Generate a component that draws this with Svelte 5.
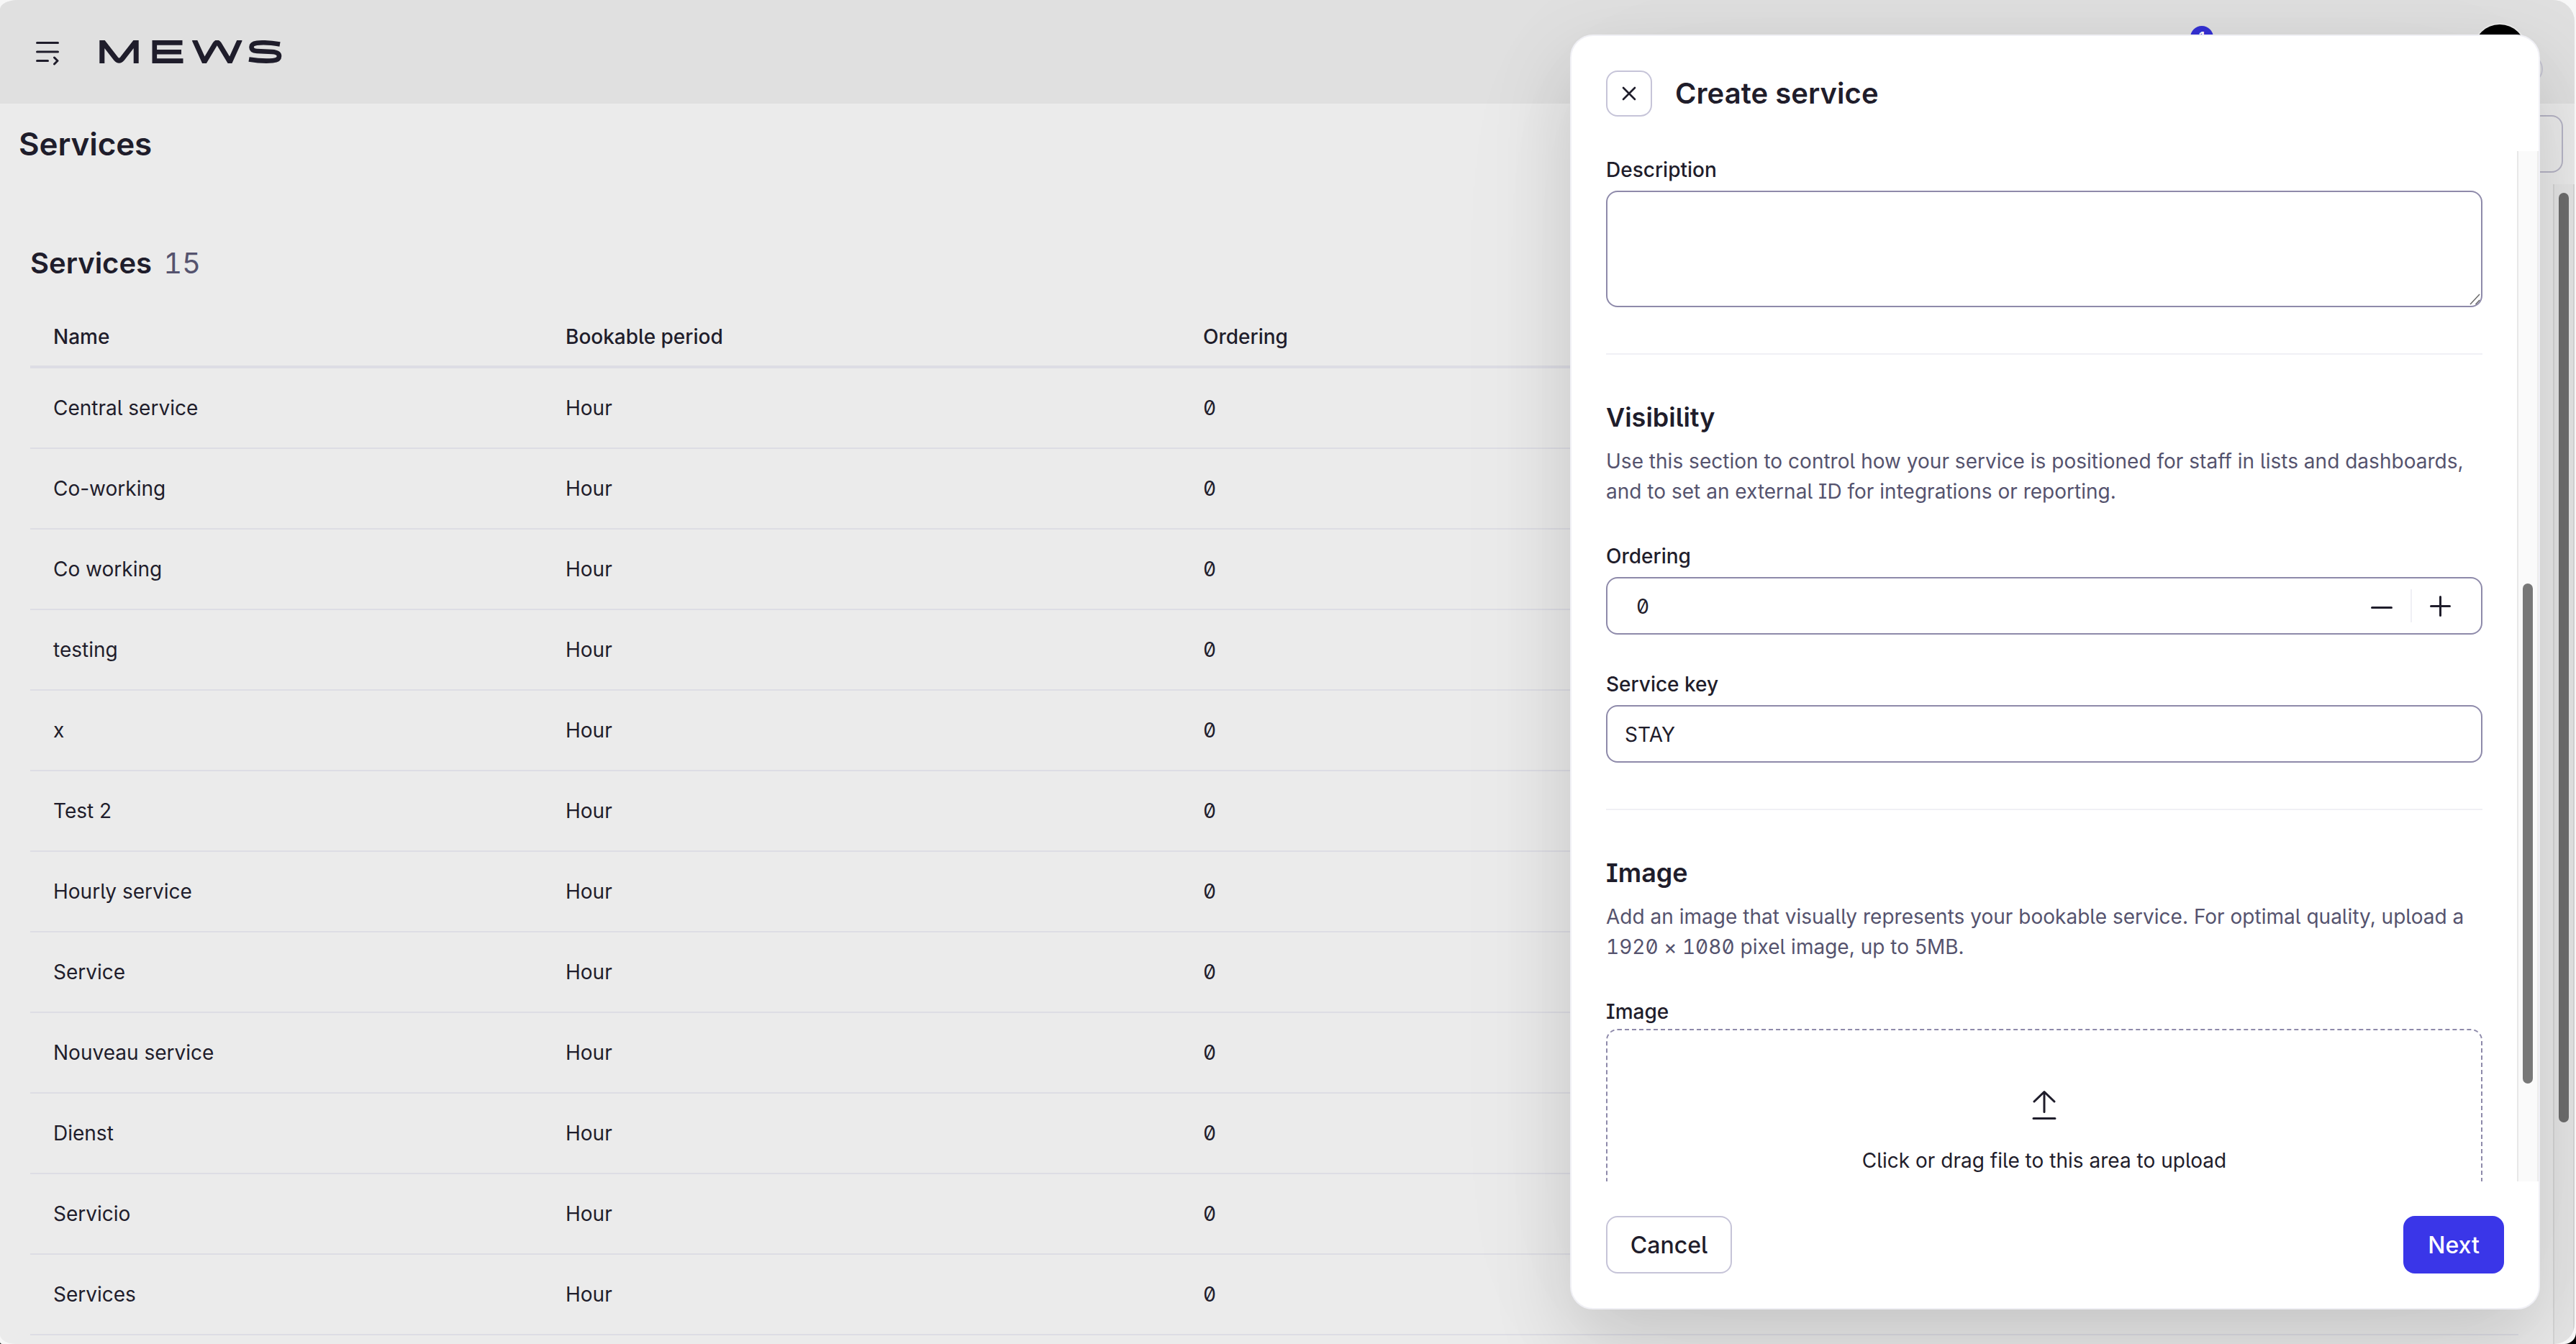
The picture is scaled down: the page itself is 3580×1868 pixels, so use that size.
<script lang="ts">
	const services = [
		'Central service',
		'Co-working',
		'Co working',
		'testing',
		'x',
		'Test 2',
		'Hourly service',
		'Service',
		'Nouveau service',
		'Dienst',
		'Servicio',
		'Services'
	].map((name) => ({ name, period: 'Hour', ordering: 0 }))

	let description = ''
	let ordering = 0
	let serviceKey = 'STAY'
</script>

<div class="shell">
	<div class="window">
		<header class="topbar">
			<svg class="menu" width="32" height="36" viewBox="0 0 32 36" fill="none" stroke-width="3" stroke-linecap="round" stroke-linejoin="round">
				<path d="M1.5 3.5H30.5M1.5 16H30.5M1.5 28.5H16.5M25.5 24L30 28.5L25.5 33" />
			</svg>
			<svg class="logo" width="254" height="32" viewBox="0 0 254 32" role="img" aria-label="Mews">
				<g fill="none" stroke-width="7">
					<path d="M3.8 32V0M51.2 32V0M4 1L23 25.5Q27.5 31 32 25.5L51 1" />
					<path d="M76.8 0V32M76 3.4H115.5M76 16.2H114M76 28.6H116.5" stroke-width="6.6" />
					<path d="M132 -1L146 30L161 5Q163.7 1 166.4 5L181.5 30L195.5 -1" />
					<path d="M251 5.5Q232 2.2 219 3.8Q211.5 4.8 211.5 9.5Q211.5 14.5 219 15L240 16Q250 16.6 250 22Q250 27.5 241 28.3Q226 29.5 208 26.5" stroke-width="6.6" />
				</g>
			</svg>
			<div class="account">
				<span class="badge">1</span>
				<span class="avatar"></span>
				<span class="chip"></span>
			</div>
		</header>

		<div class="titlebar">
			<h1>Services</h1>
			<button class="action" aria-label="Actions"></button>
		</div>

		<div class="content">
			<main>
				<h2>Services <span class="count numeric">15</span></h2>
				<div class="row head">
					<span>Name</span>
					<span>Bookable period</span>
					<span>Ordering</span>
				</div>
				{#each services as service, index (index)}
					<div class="row">
						<span>{service.name}</span>
						<span>{service.period}</span>
						<span class="numeric">{service.ordering}</span>
					</div>
				{/each}
			</main>
			<div class="track page-track"><div class="thumb"></div></div>
		</div>

		<aside class="drawer">
			<div class="drawer-head">
				<button class="close" aria-label="Close">
					<svg width="20" height="20" viewBox="0 0 20 20" fill="none" stroke-width="2.6" stroke-linecap="round">
						<path d="M2 2L18 18M18 2L2 18" />
					</svg>
				</button>
				<h2>Create service</h2>
			</div>

			<div class="drawer-body">
				<form>
					<label for="description">Description</label>
					<div class="area">
						<textarea id="description" bind:value={description}></textarea>
						<svg class="grip" width="16" height="16" viewBox="0 0 16 16" fill="none" stroke-width="1.5">
							<path d="M1 15L14 1M8.5 15L14 9" />
						</svg>
					</div>
					<hr />

					<h3>Visibility</h3>
					<p>Use this section to control how your service is positioned for staff in lists and dashboards, and to set an external ID for integrations or reporting.</p>
					<label for="ordering">Ordering</label>
					<div class="field number">
						<input id="ordering" class="numeric" bind:value={ordering} />
						<svg width="32" height="32" viewBox="0 0 32 32" fill="none" stroke-width="3" stroke-linecap="round">
							<path d="M2.5 18.5H29.5" />
						</svg>
						<span class="split"></span>
						<svg width="32" height="32" viewBox="0 0 32 32" fill="none" stroke-width="3" stroke-linecap="round">
							<path d="M3.5 16.5H29.5M16.5 3.5V29.5" />
						</svg>
					</div>
					<label class="key-label" for="key">Service key</label>
					<div class="field">
						<input id="key" bind:value={serviceKey} />
					</div>
					<hr />

					<h3>Image</h3>
					<p>Add an image that visually represents your bookable service. For optimal quality, upload a <span class="numeric">1920 × 1080</span> pixel image, up to 5MB.</p>
					<span class="label">Image</span>
					<div class="dropzone">
						<svg width="34" height="42" viewBox="0 0 34 42" fill="none" stroke-width="3" stroke-linecap="round" stroke-linejoin="round">
							<path d="M17 30.5V2.5M3 16L17 2.5L31 16M2 39.5H32" />
						</svg>
						<span>Click or drag file to this area to upload</span>
					</div>
				</form>
				<div class="track"><div class="thumb"></div></div>
			</div>

			<div class="drawer-foot">
				<button class="cancel">Cancel</button>
				<button class="next">Next</button>
			</div>
		</aside>
	</div>
</div>

<style>
	:global(body) {
		background: #000;
		overflow: hidden;
	}

	.shell {
		width: 3580px;
		height: 1868px;
		border-radius: 0 0 16px 3px;
		background: #f7f7f7;
		overflow: hidden;
	}

	.window,
	.window * {
		box-sizing: border-box;
	}

	.window {
		position: relative;
		display: flex;
		flex-direction: column;
		width: 3578px;
		height: 1868px;
		overflow: hidden;
		border-radius: 25px 30px 28px 22px / 13px 30px 28px 13px;
		background: #ebebeb;
		color: #1f1d2b;
		font-family: Inter, 'Liberation Sans', sans-serif;
		font-size: 28px;
		font-feature-settings: 'zero', 'ss02';
	}

	h1,
	h2,
	h3,
	p {
		margin: 0;
	}

	button,
	input,
	textarea {
		padding: 0;
		border: none;
		background: none;
		color: inherit;
		font: inherit;
		font-feature-settings: inherit;
		letter-spacing: inherit;
		outline: none;
	}

	.window .numeric {
		font-feature-settings: 'tnum', 'zero', 'ss02';
	}

	svg {
		display: block;
		flex: none;
		stroke: #1f1d2b;
	}

	.topbar {
		display: flex;
		flex: none;
		height: 144px;
		padding: 56px 44px 0 50px;
		background: #e0e0e0;
	}

	.logo {
		margin-left: 56px;
	}

	.account {
		display: flex;
		margin: -24px 0 0 auto;
	}

	.badge {
		width: 32px;
		height: 32px;
		margin-top: 4px;
		border-radius: 50%;
		background: #3531d4;
		color: #fff;
		font-size: 20px;
		font-weight: 600;
		line-height: 32px;
		text-align: center;
	}

	.avatar {
		width: 76px;
		height: 76px;
		margin-left: 360px;
		border: 2px solid #ebebeb;
		border-radius: 50%;
		background: #000;
	}

	.chip {
		width: 40px;
		height: 40px;
		margin: 44px 0 0 -18px;
		border: 2px solid #c6c5d2;
		border-radius: 50%;
	}

	.titlebar {
		display: flex;
		flex: none;
		justify-content: space-between;
		height: 112px;
		padding: 16px 16px 0 26px;
	}

	h1 {
		font-size: 44px;
		font-weight: 600;
		letter-spacing: -0.1px;
		line-height: 80px;
	}

	.action {
		width: 240px;
		height: 80px;
		border: 2px solid #b7b5c6;
		border-radius: 16px;
	}

	.content {
		display: flex;
		flex: 1;
		justify-content: space-between;
	}

	main {
		width: 3458px;
		margin-left: 42px;
		padding-top: 86px;
	}

	main h2 {
		height: 84px;
		font-size: 40px;
		font-weight: 600;
		line-height: 48px;
	}

	.count {
		margin-left: 6px;
		color: #55536e;
		font-weight: 400;
	}

	.row {
		display: grid;
		grid-template-columns: 712px 886px 1fr;
		height: 112px;
		padding-left: 32px;
		border-bottom: 2px solid #dddde4;
		line-height: 110px;
	}

	.row.head {
		height: 86px;
		border-bottom-width: 4px;
		font-weight: 500;
		line-height: 84px;
	}

	.track {
		flex: none;
		width: 30px;
		padding-left: 6px;
		border-left: 2px solid #e8e8e8;
		border-right: 2px solid #ededed;
		background: #fafafa;
	}

	.thumb {
		width: 14px;
		height: 695px;
		margin-top: 601px;
		border-radius: 7px;
		background: #787878;
	}

	.page-track {
		border-color: #d6d6d6;
		background: #e6e6e6;
	}

	.page-track .thumb {
		height: 1292px;
		margin-top: 12px;
		background: #6e6e6e;
	}

	.drawer {
		position: absolute;
		top: 48px;
		right: 48px;
		display: flex;
		flex-direction: column;
		width: 1348px;
		height: 1772px;
		border: 2px solid #f0f0f5;
		border-radius: 32px;
		background: #fff;
		box-shadow:
			0 44px 110px rgba(0, 0, 0, 0.15),
			0 16px 240px rgba(0, 0, 0, 0.03);
	}

	.drawer-head {
		display: flex;
		flex: none;
		gap: 32px;
		height: 160px;
		padding: 48px 48px 0;
	}

	.close {
		display: flex;
		align-items: center;
		justify-content: center;
		width: 64px;
		height: 64px;
		border: 2px solid #c6c4d8;
		border-radius: 16px;
	}

	.drawer-head h2 {
		font-size: 40px;
		font-weight: 600;
		letter-spacing: 0.05px;
		line-height: 64px;
	}

	.drawer-body {
		display: flex;
		flex: none;
		justify-content: space-between;
		height: 1432px;
		overflow: hidden;
	}

	form {
		width: 1218px;
		margin-left: 48px;
		padding-top: 5px;
	}

	label,
	.label {
		display: block;
		height: 50px;
		font-weight: 500;
		line-height: 42px;
	}

	.label {
		height: 45px;
	}

	.area {
		position: relative;
	}

	textarea {
		display: block;
		width: 100%;
		height: 162px;
		border: 2px solid #8e8aaa;
		border-radius: 16px;
		resize: none;
	}

	.grip {
		position: absolute;
		right: 2px;
		bottom: 3px;
		stroke: #6b6b6b;
	}

	hr {
		height: 2px;
		margin: 64px 0 62px;
		border: none;
		background: #f0f0f5;
	}

	h3 {
		height: 65px;
		font-size: 36px;
		font-weight: 600;
		line-height: 50px;
	}

	p {
		height: 132px;
		color: #55536e;
		letter-spacing: 0.015px;
		line-height: 42px;
	}

	.field {
		display: flex;
		align-items: center;
		height: 80px;
		padding: 0 24px;
		border: 2px solid #8e8aaa;
		border-radius: 16px;
	}

	input {
		flex: 1;
		padding-top: 2px;
	}

	.number {
		padding: 0 41px 0 40px;
	}

	.key-label {
		margin-top: 48px;
	}

	.split {
		width: 2px;
		height: 46px;
		margin: 0 23px 0 24px;
		background: #f0f0f5;
	}

	.dropzone {
		display: flex;
		flex-direction: column;
		align-items: center;
		gap: 39px;
		height: 300px;
		padding-top: 83px;
		border: 2px dashed #8e8aaa;
		border-radius: 16px;
		letter-spacing: 0.02px;
	}

	.drawer-foot {
		display: flex;
		justify-content: space-between;
		padding: 48px 48px 0;
		font-size: 32px;
		font-weight: 500;
	}

	.cancel,
	.next {
		height: 80px;
		border-radius: 16px;
	}

	.cancel {
		width: 175px;
		border: 2px solid #c6c4d8;
	}

	.next {
		width: 140px;
		background: #3a36e8;
		color: #fff;
	}
</style>
